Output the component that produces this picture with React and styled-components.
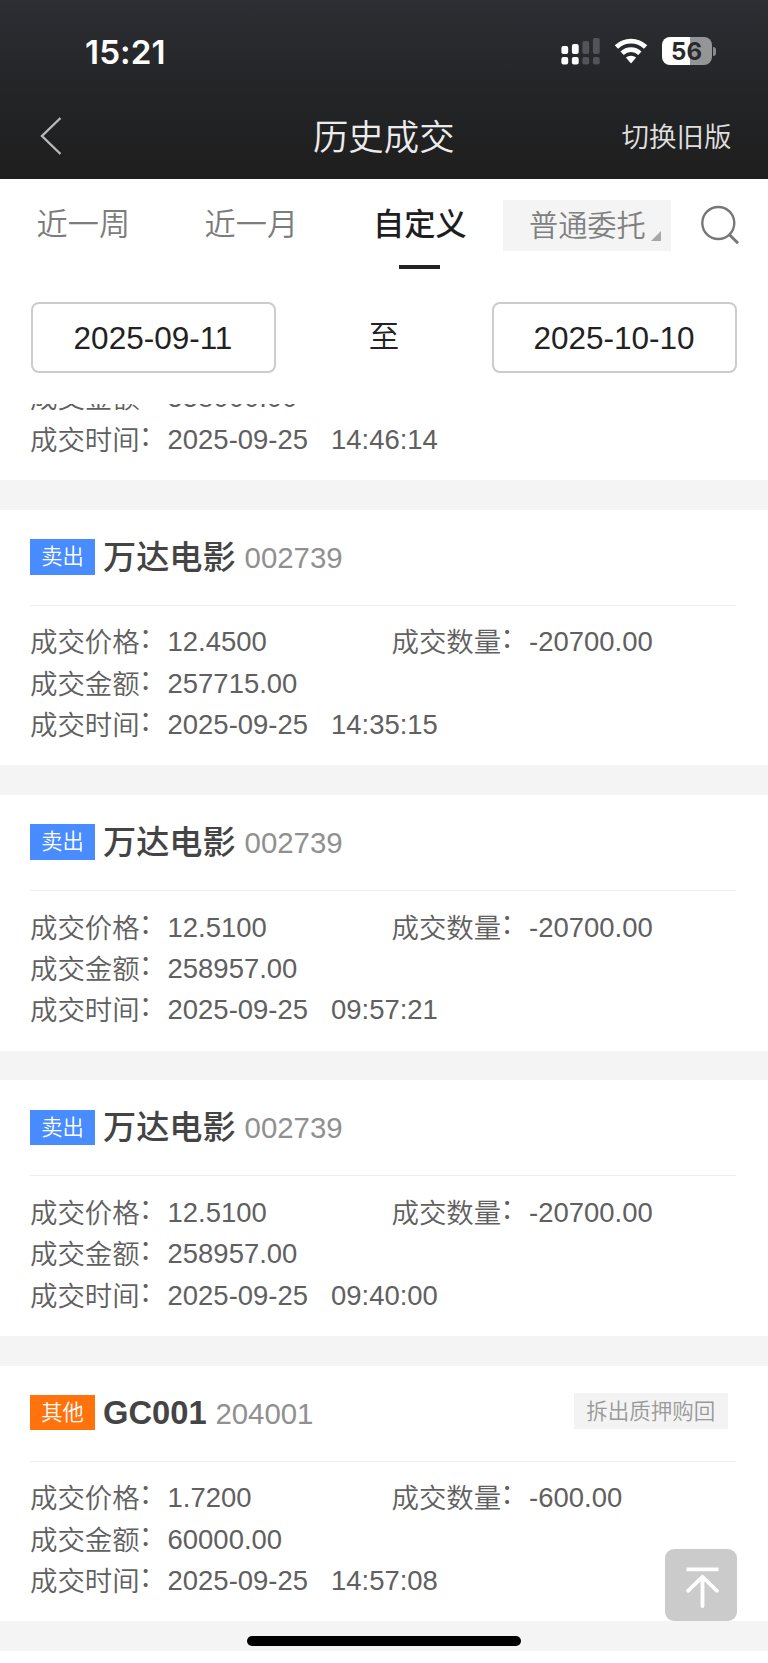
import React from "react";
import styled, { createGlobalStyle } from "styled-components";

const GlobalStyle = createGlobalStyle`
  * { box-sizing: border-box; }
  body {
    margin: 0;
    background: #fff;
    font-family: "Liberation Sans", "Noto Sans CJK SC", sans-serif;
  }
`;

const Screen = styled.div`
  position: relative;
  width: 768px;
  height: 1663px;
  overflow: hidden;
  background: #fff;
  display: flex;
  flex-direction: column;
`;

const TopArea = styled.header`
  height: 179px;
  flex: none;
  background: linear-gradient(#2d2e33, #232426 55%, #1e1e1e);
`;

const StatusBar = styled.div`
  height: 96px;
  padding: 6px 52px 0 85px;
  display: flex;
  align-items: center;
  justify-content: space-between;
`;

const Clock = styled.span`
  padding-top: 1px;
  font: 600 33.2px/40px Inter, sans-serif;
  letter-spacing: 0.1px;
  color: #fff;
`;

const StatusIcons = styled.div`
  display: flex;
  align-items: center;
`;

const WifiSvg = styled.svg`
  margin: 0 14px 0 14px;
`;

const Battery = styled.div`
  width: 49.5px;
  height: 27.5px;
  border-radius: 8px;
  background: linear-gradient(90deg, #fff 56%, #949597 56%);
  color: #292a2e;
  font: 700 24px/29px Inter, sans-serif;
  letter-spacing: 0.2px;
  text-align: center;
`;

const BatteryNub = styled.div`
  width: 3px;
  height: 9px;
  margin-left: 1.5px;
  border-radius: 0 4px 4px 0;
  background: #88898b;
`;

const NavBar = styled.div`
  height: 82px;
  padding: 0 36.5px 2px 40px;
  display: grid;
  grid-template-columns: 1fr auto 1fr;
  align-items: center;
`;

const NavTitle = styled.h1`
  margin: 3px 0 0 -4px;
  font-size: 35.4px;
  font-weight: 350;
  line-height: 44px;
  color: #ececec;
`;

const NavAction = styled.span`
  justify-self: end;
  margin-top: 4px;
  font-size: 27.5px;
  font-weight: 350;
  line-height: 40px;
  color: #e0e0e0;
`;

const TabBar = styled.nav`
  height: 92px;
  flex: none;
  padding-left: 36.5px;
  display: flex;
  align-items: flex-start;
`;

const Tab = styled.div`
  width: ${(p) => p.$width}px;
  padding-top: 24px;
  display: flex;
  flex-direction: column;
  align-items: flex-start;
  font-size: 31.2px;
  line-height: 44px;
  font-weight: ${(p) => (p.$active ? 500 : 350)};
  color: ${(p) => (p.$active ? "#1e1e1e" : "#7c7c7c")};
`;

const Underline = styled.i`
  width: 41px;
  height: 4px;
  margin: 18px 0 0 26px;
  background: #222;
`;

const TypeSelect = styled.div`
  width: 168px;
  height: 51px;
  margin-top: 21px;
  padding: 0 10px 10px 26px;
  display: flex;
  align-items: flex-end;
  justify-content: space-between;
  background: #f4f4f4;
  color: #808080;
  font-size: 29.2px;
  font-weight: 350;
  line-height: 30px;
`;

const Corner = styled.i`
  width: 10px;
  height: 10px;
  background: #a8a8a8;
  clip-path: polygon(100% 0, 100% 100%, 0 100%);
`;

const SearchSvg = styled.svg`
  margin: 26px 0 0 30px;
`;

const DateRange = styled.div`
  height: 133px;
  flex: none;
  padding: 30.5px 31px 0;
  display: flex;
  justify-content: space-between;
  align-items: flex-start;
  color: #222;
`;

const DateBox = styled.div`
  width: 245px;
  height: 71.5px;
  padding-right: 1px;
  border: 2px solid #ccc;
  border-radius: 8px;
  text-align: center;
  font-size: 31.5px;
  line-height: 68px;
`;

const To = styled.span`
  font-size: 30.5px;
  font-weight: 350;
  line-height: 68px;
`;

const List = styled.main`
  height: 1247px;
  flex: none;
  overflow: hidden;
  background: #f4f4f4;
  display: flex;
  flex-direction: column;
  gap: 29.6px;
`;

const Card = styled.section`
  height: ${(p) => (p.$cut ? 76 : 255.73)}px;
  flex: none;
  padding: 0 32px 20px 30px;
  background: #fff;
  display: flex;
  flex-direction: column;
  justify-content: flex-end;
  overflow: hidden;
`;

const CardHead = styled.div`
  height: 96px;
  margin-bottom: 15.8px;
  border-bottom: 1.4px solid #efefef;
  display: flex;
  align-items: flex-start;
`;

const Tag = styled.span`
  width: 65px;
  height: 35.6px;
  margin: 29.3px 8px 0 0;
  background: ${(p) => (p.$other ? "#ff720c" : "#488cff")};
  color: #fff;
  font-size: 21.3px;
  font-weight: 350;
  line-height: 37px;
  text-align: center;
`;

const Name = styled.strong`
  margin-top: ${(p) => (p.$latin ? 28 : 29)}px;
  font-size: ${(p) => (p.$latin ? 32.7 : 33.2)}px;
  font-weight: ${(p) => (p.$latin ? 700 : 500)};
  line-height: 38px;
  color: #444;
`;

const Code = styled.span`
  margin: 28px 0 0 8.8px;
  font-size: 29.4px;
  line-height: 40.6px;
  color: #909090;
`;

const Note = styled.span`
  width: 153.5px;
  height: 36px;
  margin: 27px 8.5px 0 auto;
  background: #f3f3f3;
  color: #999;
  font-size: 21.5px;
  font-weight: 350;
  line-height: 38px;
  text-align: center;
`;

const Row = styled.div`
  flex: none;
  display: flex;
  height: 41.3px;
  line-height: 41.3px;
  font-size: 27.45px;
  color: #606060;
  white-space: pre;
`;

const Cell = styled.div`
  flex: none;
  width: 361.5px;
  display: flex;
`;

const LabelText = styled.span`
  width: 137.6px;
  padding-top: 1px;
  font-weight: 350;
`;

const Colon = styled.span`
  margin-left: -1px;
  line-height: 0;
  vertical-align: 4px;
`;

const Time = styled.span`
  margin-left: 23.1px;
`;

const BackTop = styled.button`
  position: absolute;
  left: 665.4px;
  top: 1549px;
  width: 71.5px;
  height: 72px;
  padding: 0;
  border: 0;
  border-radius: 9px;
  background: #cbcbcb;
`;

const HomeIndicator = styled.div`
  position: absolute;
  left: 247.4px;
  top: 1636px;
  width: 273.5px;
  height: 10px;
  border-radius: 5px;
  background: #000;
`;

const Signal = () => (
  <svg width="40" height="28" viewBox="0 0 40 28">
    {[
      [1.4, 9, 8, "#fff"],
      [11.9, 7, 10, "#fff"],
      [22.4, 4, 13, "#535459"],
      [32.9, 1, 16, "#535459"],
    ].map(([x, y, h, fill]) => (
      <g key={x} fill={fill}>
        <rect x={x} y={y} width="6.8" height={h} rx="2" />
        <rect x={x} y="20" width="6.8" height="7.6" rx="2" />
      </g>
    ))}
  </svg>
);

const Wifi = () => (
  <WifiSvg width="34" height="26" viewBox="0 0 34 26">
    <g fill="none" stroke="#fff" strokeWidth="4.8">
      <path d="M2.4 9.1A21 21 0 0 1 31.6 9.1" />
      <path d="M8.1 15.2A12.8 12.8 0 0 1 25.9 15.2" />
    </g>
    <path d="M11.9 19.6a7.6 7.6 0 0 1 10.2 0L17.7 24.8a1 1 0 0 1-1.4 0Z" fill="#fff" />
  </WifiSvg>
);

const trades = [
  { name: "万达电影", code: "002739", price: "12.4500", qty: "-20700.00", amount: "257715.00", time: "14:35:15" },
  { name: "万达电影", code: "002739", price: "12.5100", qty: "-20700.00", amount: "258957.00", time: "09:57:21" },
  { name: "万达电影", code: "002739", price: "12.5100", qty: "-20700.00", amount: "258957.00", time: "09:40:00" },
  { name: "GC001", code: "204001", price: "1.7200", qty: "-600.00", amount: "60000.00", time: "14:57:08", other: true, note: "拆出质押购回" },
];

const Label = ({ children }) => (
  <LabelText>
    {children}
    <Colon>：</Colon>
  </LabelText>
);

const Field = ({ label, value }) => (
  <Cell>
    <Label>{label}</Label>
    {value}
  </Cell>
);

const AmountAndTime = ({ amount, time }) => (
  <>
    <Row>
      <Field label="成交金额" value={amount} />
    </Row>
    <Row>
      <Label>成交时间</Label>
      2025-09-25
      <Time>{time}</Time>
    </Row>
  </>
);

const Trade = ({ t }) => (
  <Card>
    <CardHead>
      <Tag $other={t.other}>{t.other ? "其他" : "卖出"}</Tag>
      <Name $latin={t.other}>{t.name}</Name>
      <Code>{t.code}</Code>
      {t.note && <Note>{t.note}</Note>}
    </CardHead>
    <Row>
      <Field label="成交价格" value={t.price} />
      <Field label="成交数量" value={t.qty} />
    </Row>
    <AmountAndTime amount={t.amount} time={t.time} />
  </Card>
);

export default function App() {
  return (
    <>
      <GlobalStyle />
      <Screen>
        <TopArea>
          <StatusBar>
            <Clock>15:21</Clock>
            <StatusIcons>
              <Signal />
              <Wifi />
              <Battery>56</Battery>
              <BatteryNub />
            </StatusIcons>
          </StatusBar>
          <NavBar>
            <svg width="24" height="40" viewBox="0 0 24 40">
              <path d="M20.5 2 2 20 20.5 38" fill="none" stroke="#b8b8b8" strokeWidth="2.4" />
            </svg>
            <NavTitle>历史成交</NavTitle>
            <NavAction>切换旧版</NavAction>
          </NavBar>
        </TopArea>
        <TabBar>
          <Tab $width={168}>近一周</Tab>
          <Tab $width={168.5}>近一月</Tab>
          <Tab $width={130} $active>
            自定义
            <Underline />
          </Tab>
          <TypeSelect>
            普通委托
            <Corner />
          </TypeSelect>
          <SearchSvg width="40" height="40" viewBox="0 0 40 40">
            <g fill="none" stroke="#777" strokeWidth="2.4">
              <circle cx="17.3" cy="18" r="16" />
              <path d="M28 29.3 37 38.2" strokeWidth="3" />
            </g>
          </SearchSvg>
        </TabBar>
        <DateRange>
          <DateBox>2025-09-11</DateBox>
          <To>至</To>
          <DateBox>2025-10-10</DateBox>
        </DateRange>
        <List>
          <Card $cut>
            <AmountAndTime amount="558000.00" time="14:46:14" />
          </Card>
          {trades.map((t) => (
            <Trade key={t.time} t={t} />
          ))}
        </List>
        <BackTop aria-label="top">
          <svg width="71" height="72" viewBox="0 0 71 72">
            <g fill="none" stroke="#fff" strokeWidth="3.8" strokeLinecap="round" strokeLinejoin="round">
              <path d="M20.5 20.3H52.5" strokeLinecap="butt" />
              <path d="M36.5 57V28M22 41.8 36.5 27.8 51 41.8" />
            </g>
          </svg>
        </BackTop>
        <HomeIndicator />
      </Screen>
    </>
  );
}
